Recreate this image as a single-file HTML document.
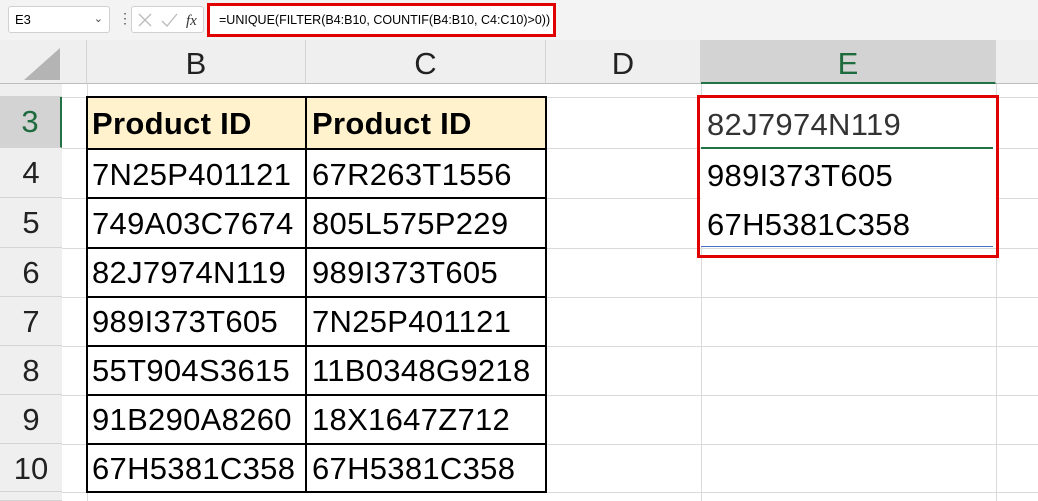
<!DOCTYPE html>
<html><head><meta charset="utf-8"><style>
*{margin:0;padding:0;box-sizing:border-box}
body{width:1038px;height:501px;overflow:hidden;background:#fff;font-family:"Liberation Sans",sans-serif;position:relative}
.a{position:absolute}
.tb{left:0;top:0;width:1038px;height:40px;background:#f3f3f3}
.cell{position:absolute;font-size:31px;color:#000;white-space:nowrap;line-height:49px;padding-left:6px;letter-spacing:0.3px}
.rh{position:absolute;left:0;width:62px;background:#efefef;border-bottom:1px solid #d4d4d4;font-size:31px;text-align:center;line-height:50px;color:#222}
.ch{position:absolute;top:40px;height:44px;background:#efefef;border-right:1px solid #d4d4d4;border-bottom:1px solid #bdbdbd;font-size:31px;text-align:center;line-height:48px;color:#222}
.hl{position:absolute;height:1px;background:#dadada}
.vl{position:absolute;width:1px;background:#dadada}
</style></head><body>
<div class="a tb"></div>
<div class="a" style="left:8px;top:6px;width:102px;height:27px;background:#fff;border:1px solid #d0d0d0;border-radius:3px;font-size:13px;line-height:25px;padding-left:6px">E3<span style="position:absolute;right:6px;top:0;font-size:11px;color:#444">&#8964;</span></div>
<div class="a" style="left:118px;top:10px;font-size:14px;color:#555">&#8942;</div>
<div class="a" style="left:131px;top:6px;width:73px;height:27px;background:#fff;border:1px solid #d0d0d0;border-radius:3px"></div>
<svg class="a" style="left:136px;top:11px" width="70" height="18"><path d="M3 3L15 15M15 3L3 15" stroke="#bbb" stroke-width="1.3"/><path d="M26 10L31 15L41 3" stroke="#bbb" stroke-width="1.3" fill="none"/><text x="50" y="14" font-family="Liberation Serif" font-style="italic" font-size="15" fill="#333">fx</text></svg>
<div class="a" style="left:207px;top:3px;width:349px;height:34px;background:#fff;border:3px solid #e00000;font-size:12.5px;line-height:28px;padding-left:9px;white-space:nowrap;overflow:hidden">=UNIQUE(FILTER(B4:B10, COUNTIF(B4:B10, C4:C10)&gt;0))</div>

<div class="ch" style="left:0;width:87px"></div>
<svg class="a" style="left:20px;top:46px" width="42" height="36"><polygon points="40,2 40,34 4,34" fill="#b4b4b4"/></svg>
<div class="ch" style="left:87px;width:219px">B</div>
<div class="ch" style="left:306px;width:240px">C</div>
<div class="ch" style="left:546px;width:155px">D</div>
<div class="ch" style="left:701px;width:295px;background:#d3d3d3;color:#1e6b3e;border-bottom:2px solid #217346">E</div>
<div class="ch" style="left:996px;width:60px"></div>

<div class="vl" style="left:87px;top:84px;height:417px"></div>
<div class="vl" style="left:701px;top:84px;height:417px"></div>
<div class="vl" style="left:996px;top:84px;height:417px"></div>
<div class="hl" style="left:62px;top:97px;width:976px"></div>
<div class="hl" style="left:62px;top:148px;width:976px"></div>
<div class="hl" style="left:62px;top:198px;width:976px"></div>
<div class="hl" style="left:62px;top:248px;width:976px"></div>
<div class="hl" style="left:62px;top:297px;width:976px"></div>
<div class="hl" style="left:62px;top:346px;width:976px"></div>
<div class="hl" style="left:62px;top:395px;width:976px"></div>
<div class="hl" style="left:62px;top:444px;width:976px"></div>
<div class="hl" style="left:62px;top:492px;width:976px"></div>

<div class="rh" style="top:84px;height:13px"></div>
<div class="rh" style="top:97px;height:51px;background:#d3d3d3;color:#1e6b3e;border-right:2px solid #217346">3</div>
<div class="rh" style="top:148px;height:50px">4</div>
<div class="rh" style="top:198px;height:50px">5</div>
<div class="rh" style="top:248px;height:49px">6</div>
<div class="rh" style="top:297px;height:49px">7</div>
<div class="rh" style="top:346px;height:49px">8</div>
<div class="rh" style="top:395px;height:49px">9</div>
<div class="rh" style="top:444px;height:48px">10</div>
<div class="rh" style="top:492px;height:9px"></div>

<div class="a" style="left:86px;top:96px;width:461px;height:53px;background:#fff2cc"></div>
<div class="a" style="left:86px;top:96px;width:461px;height:397px;border:2px solid #000"></div>
<div class="a" style="left:305px;top:96px;width:2px;height:397px;background:#000"></div>
<div class="a" style="left:86px;top:148px;width:461px;height:2px;background:#000"></div>
<div class="a" style="left:86px;top:197px;width:461px;height:2px;background:#000"></div>
<div class="a" style="left:86px;top:247px;width:461px;height:2px;background:#000"></div>
<div class="a" style="left:86px;top:296px;width:461px;height:2px;background:#000"></div>
<div class="a" style="left:86px;top:345px;width:461px;height:2px;background:#000"></div>
<div class="a" style="left:86px;top:394px;width:461px;height:2px;background:#000"></div>
<div class="a" style="left:86px;top:443px;width:461px;height:2px;background:#000"></div>

<div class="cell" style="left:86px;top:99px;font-weight:bold">Product ID</div>
<div class="cell" style="left:306px;top:99px;font-weight:bold">Product ID</div>
<div class="cell" style="left:86px;top:150px">7N25P401121</div><div class="cell" style="left:306px;top:150px">67R263T1556</div>
<div class="cell" style="left:86px;top:199px">749A03C7674</div><div class="cell" style="left:306px;top:199px">805L575P229</div>
<div class="cell" style="left:86px;top:248px">82J7974N119</div><div class="cell" style="left:306px;top:248px">989I373T605</div>
<div class="cell" style="left:86px;top:297px">989I373T605</div><div class="cell" style="left:306px;top:297px">7N25P401121</div>
<div class="cell" style="left:86px;top:346px">55T904S3615</div><div class="cell" style="left:306px;top:346px">11B0348G9218</div>
<div class="cell" style="left:86px;top:395px">91B290A8260</div><div class="cell" style="left:306px;top:395px">18X1647Z712</div>
<div class="cell" style="left:86px;top:444px">67H5381C358</div><div class="cell" style="left:306px;top:444px">67H5381C358</div>

<div class="a" style="left:701px;top:97px;width:295px;height:150px;background:#fff"></div>
<div class="a" style="left:701px;top:147px;width:292px;height:2px;background:#217346"></div>
<div class="a" style="left:701px;top:246px;width:292px;height:1px;background:#4472c4"></div>
<div class="cell" style="left:701px;top:100px;color:#333">82J7974N119</div>
<div class="cell" style="left:701px;top:151px">989I373T605</div>
<div class="cell" style="left:701px;top:200px">67H5381C358</div>
<div class="a" style="left:697px;top:95px;width:302px;height:163px;border:3px solid #e00000"></div>
</body></html>
